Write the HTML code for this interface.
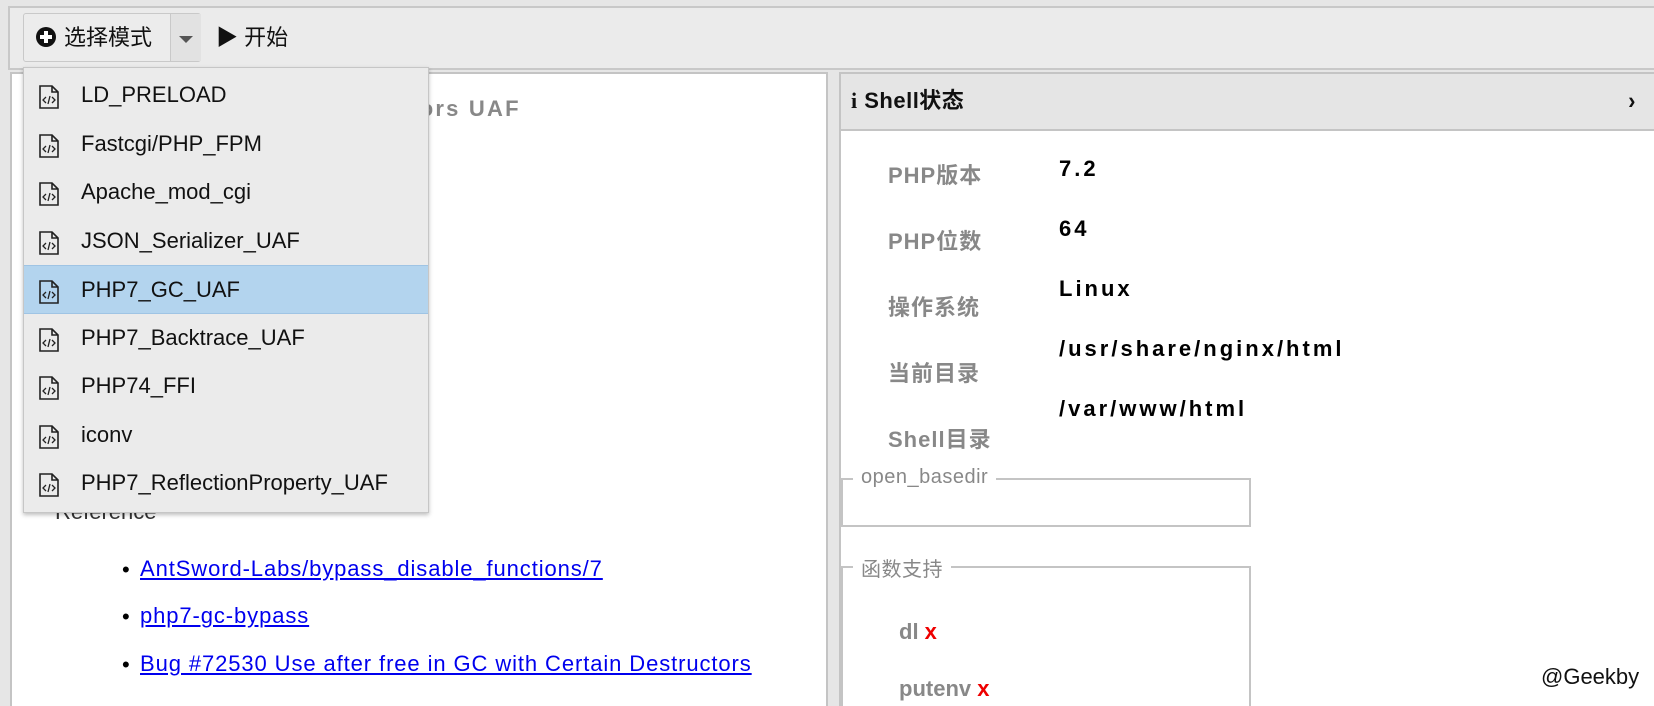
<!DOCTYPE html>
<html><head><meta charset="utf-8"><style>
*{box-sizing:border-box;margin:0;padding:0}
html,body{width:1654px;height:706px;overflow:hidden}
body{background:#e6e6e6;font-family:"Liberation Sans","Noto Sans CJK SC",sans-serif}
#w{position:relative;width:1654px;height:706px;overflow:hidden;background:#e6e6e6}
.abs{position:absolute}
.top{left:8px;top:6px;right:0;height:64px;background:#ebebeb;border-top:2px solid #c8c8c8;border-left:2px solid #c8c8c8;border-bottom:2px solid #c8c8c8}
.btn{left:23px;top:13px;width:178px;height:49px;border:1px solid #c9c9c9;border-radius:3px;background:#ececec;font-size:22px;line-height:47px;color:#111}
.left{left:10px;top:72px;width:818px;height:634px;background:#fff;border:2px solid #c4c4c4;border-bottom:none}
.right{left:839px;top:72px;width:815px;height:634px;background:#fff;border:2px solid #c4c4c4;border-bottom:none;border-right:none}
.hdr{left:0;top:0;right:0;height:57px;background:#e5e5e5;border-bottom:2px solid #c4c4c4;font-weight:bold;font-size:22px;line-height:54px;padding-left:10px;color:#111;letter-spacing:0.5px}
.lbl{color:#888;font-weight:bold;font-size:22px;left:47px;letter-spacing:1px}
.val{color:#000;font-weight:bold;font-size:22px;left:218px;letter-spacing:3px}
.menu{left:23px;top:67px;width:406px;height:446px;background:#ebebeb;border:1px solid #c6c6c6;box-shadow:0 2px 4px rgba(0,0,0,.25)}
.it{height:48.5px;line-height:48.5px;font-size:22px;color:#111;padding-left:57px;position:relative}
.it svg{position:absolute;left:14px;top:14px}
.sel{background:#b3d4ee;border-top:1px solid #9fc4e4;border-bottom:1px solid #9fc4e4}
a{color:#00e;font-size:22px;letter-spacing:0.9px}
.li{left:110px;font-size:22px}
.fs{border:2px solid #c4c4c4}
.lg{background:#fff;color:#888;font-size:20px;padding:0 8px;letter-spacing:0.5px}
</style></head><body><div id="w">
<div class="abs top"></div>
<div class="abs btn"><span style="position:absolute;left:12px;top:13px;width:20px;height:20px;border-radius:50%;background:#111"></span><span style="position:absolute;left:16px;top:21px;width:12px;height:4px;background:#fff"></span><span style="position:absolute;left:20px;top:17px;width:4px;height:12px;background:#fff"></span><span style="position:absolute;left:40px">选择模式</span><span style="position:absolute;left:146px;top:0;width:31px;height:47px;border-left:1px solid #c9c9c9;background:#e2e2e2"></span><span style="position:absolute;left:155px;top:22px;border:7px solid transparent;border-top:7px solid #555"></span></div>
<div class="abs" style="left:216px;top:13px;font-size:22px;line-height:49px;color:#111">▶ 开始</div>
<div class="abs left">
<div class="abs" style="left:20px;top:22px;font-size:22px;font-weight:bold;color:#888;letter-spacing:2.2px">PHP7 GC with Certain Destructors UAF</div>
<div class="abs" style="left:43px;top:425px;font-size:22px;color:#333">Reference</div>
<div class="abs li" style="top:483px">•</div><div class="abs" style="left:128px;top:482px"><a href="#">AntSword-Labs/bypass_disable_functions/7</a></div>
<div class="abs li" style="top:530px">•</div><div class="abs" style="left:128px;top:529px"><a href="#">php7-gc-bypass</a></div>
<div class="abs li" style="top:578px">•</div><div class="abs" style="left:128px;top:577px"><a href="#">Bug #72530 Use after free in GC with Certain Destructors</a></div>
</div>
<div class="abs right">
<div class="abs hdr"><span style="font-family:'Liberation Serif',serif">i</span> Shell状态<span style="position:absolute;right:18px;font-size:22px;transform:scaleY(1.1)">›</span></div>
<div class="abs lbl" style="top:84px">PHP版本</div><div class="abs val" style="top:82px">7.2</div>
<div class="abs lbl" style="top:150px">PHP位数</div><div class="abs val" style="top:142px">64</div>
<div class="abs lbl" style="top:216px">操作系统</div><div class="abs val" style="top:202px">Linux</div>
<div class="abs lbl" style="top:282px">当前目录</div><div class="abs val" style="top:262px">/usr/share/nginx/html</div>
<div class="abs lbl" style="top:348px">Shell目录</div><div class="abs val" style="top:322px">/var/www/html</div>
<div class="abs fs" style="left:0;top:404px;width:410px;height:49px"></div>
<div class="abs lg" style="left:12px;top:392px">open_basedir</div>
<div class="abs fs" style="left:0;top:492px;width:410px;height:140px;border-bottom:none"></div>
<div class="abs lg" style="left:12px;top:479px">函数支持</div>
<div class="abs" style="left:58px;top:545px;font-size:22px;font-weight:bold;color:#888">dl <span style="color:#e00">x</span></div>
<div class="abs" style="left:58px;top:602px;font-size:22px;font-weight:bold;color:#888">putenv <span style="color:#e00">x</span></div>
</div>
<div class="abs" style="left:1541px;top:664px;font-size:22px;color:#111">@Geekby</div>
<div class="abs menu">
<div style="height:3px"></div>
<div class="it"><svg width="22" height="24" viewBox="0 0 22 24"><path d="M2 1h12l6 6v16H2z M14 1v6h6" fill="none" stroke="#222" stroke-width="1.6"/><path d="M8 12l-3 3 3 3M14 12l3 3-3 3M12 11l-2 8" fill="none" stroke="#222" stroke-width="1.3"/></svg>LD_PRELOAD</div>
<div class="it"><svg width="22" height="24" viewBox="0 0 22 24"><path d="M2 1h12l6 6v16H2z M14 1v6h6" fill="none" stroke="#222" stroke-width="1.6"/><path d="M8 12l-3 3 3 3M14 12l3 3-3 3M12 11l-2 8" fill="none" stroke="#222" stroke-width="1.3"/></svg>Fastcgi/PHP_FPM</div>
<div class="it"><svg width="22" height="24" viewBox="0 0 22 24"><path d="M2 1h12l6 6v16H2z M14 1v6h6" fill="none" stroke="#222" stroke-width="1.6"/><path d="M8 12l-3 3 3 3M14 12l3 3-3 3M12 11l-2 8" fill="none" stroke="#222" stroke-width="1.3"/></svg>Apache_mod_cgi</div>
<div class="it"><svg width="22" height="24" viewBox="0 0 22 24"><path d="M2 1h12l6 6v16H2z M14 1v6h6" fill="none" stroke="#222" stroke-width="1.6"/><path d="M8 12l-3 3 3 3M14 12l3 3-3 3M12 11l-2 8" fill="none" stroke="#222" stroke-width="1.3"/></svg>JSON_Serializer_UAF</div>
<div class="it sel"><svg width="22" height="24" viewBox="0 0 22 24"><path d="M2 1h12l6 6v16H2z M14 1v6h6" fill="none" stroke="#222" stroke-width="1.6"/><path d="M8 12l-3 3 3 3M14 12l3 3-3 3M12 11l-2 8" fill="none" stroke="#222" stroke-width="1.3"/></svg>PHP7_GC_UAF</div>
<div class="it"><svg width="22" height="24" viewBox="0 0 22 24"><path d="M2 1h12l6 6v16H2z M14 1v6h6" fill="none" stroke="#222" stroke-width="1.6"/><path d="M8 12l-3 3 3 3M14 12l3 3-3 3M12 11l-2 8" fill="none" stroke="#222" stroke-width="1.3"/></svg>PHP7_Backtrace_UAF</div>
<div class="it"><svg width="22" height="24" viewBox="0 0 22 24"><path d="M2 1h12l6 6v16H2z M14 1v6h6" fill="none" stroke="#222" stroke-width="1.6"/><path d="M8 12l-3 3 3 3M14 12l3 3-3 3M12 11l-2 8" fill="none" stroke="#222" stroke-width="1.3"/></svg>PHP74_FFI</div>
<div class="it"><svg width="22" height="24" viewBox="0 0 22 24"><path d="M2 1h12l6 6v16H2z M14 1v6h6" fill="none" stroke="#222" stroke-width="1.6"/><path d="M8 12l-3 3 3 3M14 12l3 3-3 3M12 11l-2 8" fill="none" stroke="#222" stroke-width="1.3"/></svg>iconv</div>
<div class="it"><svg width="22" height="24" viewBox="0 0 22 24"><path d="M2 1h12l6 6v16H2z M14 1v6h6" fill="none" stroke="#222" stroke-width="1.6"/><path d="M8 12l-3 3 3 3M14 12l3 3-3 3M12 11l-2 8" fill="none" stroke="#222" stroke-width="1.3"/></svg>PHP7_ReflectionProperty_UAF</div>
</div>
</div></body></html>
